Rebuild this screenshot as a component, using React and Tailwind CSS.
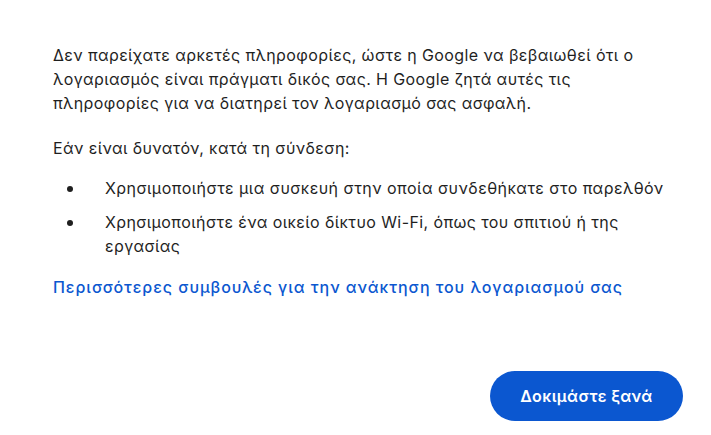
export default function App() {
  return (
    <div className="w-[711px] h-[435px] bg-white overflow-hidden" style={{ fontFamily: "Inter, 'Noto Sans', sans-serif" }}>
      <div className="pl-[53px] pr-[10px] pt-[43px] text-[16px] leading-[24px] text-[#1f1f1f] tracking-[0.4px]">
        <p>
          Δεν παρείχατε αρκετές πληροφορίες, ώστε η Google να βεβαιωθεί ότι ο<br />
          λογαριασμός είναι πράγματι δικός σας. Η Google ζητά αυτές τις<br />
          πληροφορίες για να διατηρεί τον λογαριασμό σας ασφαλή.
        </p>
        <p className="mt-[21px]">Εάν είναι δυνατόν, κατά τη σύνδεση:</p>
        <ul className="mt-[16px] flex flex-col gap-[10px]">
          <li className="flex">
            <span className="w-[52px] shrink-0 flex justify-start pl-[14px] pt-[10px]">
              <span className="w-[6px] h-[6px] rounded-full bg-[#1f1f1f]" />
            </span>
            <span className="tracking-[0.45px]">Χρησιμοποιήστε μια συσκευή στην οποία συνδεθήκατε στο παρελθόν</span>
          </li>
          <li className="flex">
            <span className="w-[52px] shrink-0 flex justify-start pl-[14px] pt-[10px]">
              <span className="w-[6px] h-[6px] rounded-full bg-[#1f1f1f]" />
            </span>
            <span>
              Χρησιμοποιήστε ένα οικείο δίκτυο Wi-Fi, όπως του σπιτιού ή της<br />εργασίας
            </span>
          </li>
        </ul>
        <p className="mt-[17px] text-[#0b57d0] font-medium tracking-[0.95px]">
          Περισσότερες συμβουλές για την ανάκτηση του λογαριασμού σας
        </p>
      </div>
      <div className="flex justify-end pr-[28px] mt-[72px]">
        <button className="h-[50px] w-[193px] rounded-full bg-[#0b57d0] text-white text-[16px] font-semibold tracking-[0.4px]">
          Δοκιμάστε ξανά
        </button>
      </div>
    </div>
  );
}
